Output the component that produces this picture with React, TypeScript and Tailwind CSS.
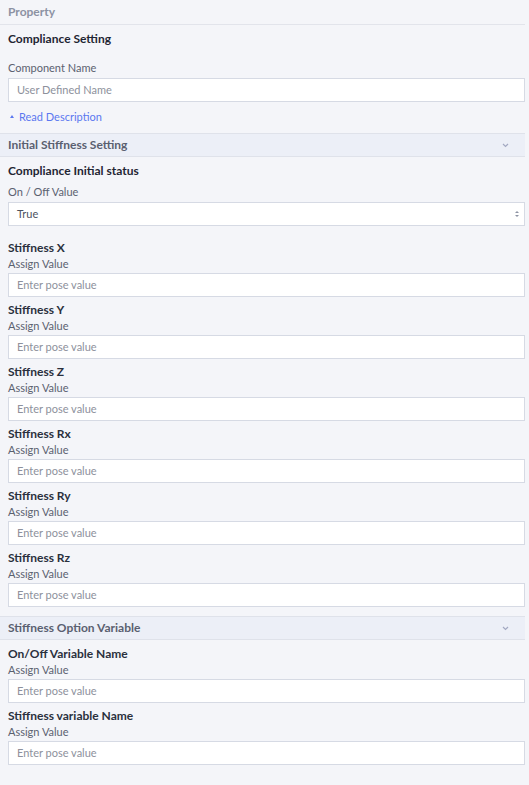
import { ReactNode } from 'react';

const font = { fontFamily: '"Lato", "Open Sans", sans-serif' };

export default function App() {
  const axes = ['X', 'Y', 'Z', 'Rx', 'Ry', 'Rz'];
  return (
    <div className="w-[529px] min-h-[785px] bg-[#f4f5f9] pr-[4px] text-[#1f2533]" style={font}>
      {/* Property header */}
      <div className="h-[25px] flex items-center pl-2 border-b border-[#e2e4eb] text-[12px] font-bold text-[#8c92a3]">
        Property
      </div>

      <div className="h-[28px] flex items-center pl-2 text-[12px] font-bold">Compliance Setting</div>

      <div className="mt-[7px] pl-2">
        <Label>Component Name</Label>
        <Input placeholder="User Defined Name" />
      </div>

      <div className="mt-[7px] h-4 flex items-center pl-[10px] text-[11px] text-[#5b78f0]">
        <svg width="4" height="3" viewBox="0 0 4 3" className="mr-[5px] mb-[1px]">
          <path d="M0 3 L2 0 L4 3 Z" fill="currentColor" />
        </svg>
        Read Description
      </div>

      <SectionHeader className="mt-[8px]">Initial Stiffness Setting</SectionHeader>

      <div className="pl-2">
        <div className="mt-[4px] h-[20px] flex items-center text-[12px] font-bold">Compliance Initial status</div>
        <div className="mt-[3px]">
          <Label>On / Off Value</Label>
        </div>
        <div className="mt-[2px] h-[24px] bg-white border border-[#d6dae4] flex items-center justify-between pl-[8px] pr-[4px] text-[11px] text-[#4b5160]">
          <span>True</span>
          <svg width="6" height="10" viewBox="0 0 6 10" className="text-[#8d93a4]">
            <path d="M1 4 L3 2 L5 4 Z" fill="currentColor" />
            <path d="M1 6 L3 8 L5 6 Z" fill="currentColor" />
          </svg>
        </div>

        <div className="mt-[14px] flex flex-col gap-[5px]">
          {axes.map((a) => (
            <Field key={a} title={`Stiffness ${a}`} />
          ))}
        </div>
      </div>

      <SectionHeader className="mt-[9px]">Stiffness Option Variable</SectionHeader>

      <div className="pl-2 mt-[6px] flex flex-col gap-[5px]">
        <Field title="On/Off Variable Name" />
        <Field title="Stiffness variable Name" />
      </div>
    </div>
  );
}

function Label({ children }: { children: ReactNode }) {
  return <div className="h-4 flex items-center text-[11px] text-[#5b6170]">{children}</div>;
}

function Input({ placeholder }: { placeholder: string }) {
  return (
    <div className="mt-[2px] h-[24px] bg-white border border-[#d6dae4] flex items-center pl-[8px] text-[11px] text-[#8d919c]">
      {placeholder}
    </div>
  );
}

function Field({ title }: { title: string }) {
  return (
    <div>
      <div className="h-4 flex items-center text-[12px] font-bold text-[#2a303d]">{title}</div>
      <div className="h-4 flex items-center text-[11px] text-[#5b6170]">Assign Value</div>
      <div className="mt-[1px] h-[24px] bg-white border border-[#d6dae4] flex items-center pl-[8px] text-[11px] text-[#8d919c]">
        Enter pose value
      </div>
    </div>
  );
}

function SectionHeader({ children, className }: { children: ReactNode; className?: string }) {
  return (
    <div
      className={`h-[24px] flex items-center justify-between pl-2 pr-[16px] bg-[#eceff7] border-y border-[#dfe2ea] text-[12px] font-bold text-[#5a6070] ${className ?? ''}`}
    >
      <span>{children}</span>
      <svg width="7" height="5" viewBox="0 0 7 5" className="text-[#a3a9c2]">
        <path d="M1 1 L3.5 3.5 L6 1" stroke="currentColor" strokeWidth="1.2" fill="none" />
      </svg>
    </div>
  );
}
